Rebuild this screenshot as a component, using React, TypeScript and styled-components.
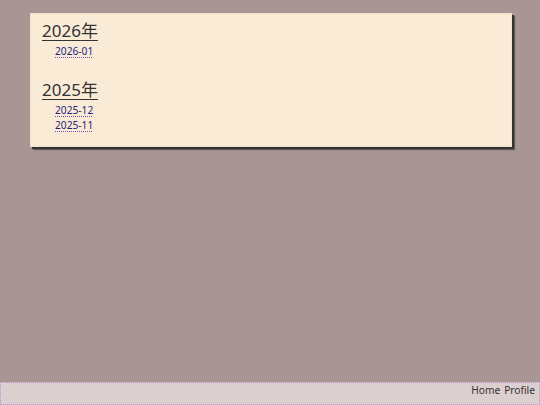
import React from "react";
import styled, { createGlobalStyle } from "styled-components";

const Global = createGlobalStyle`
  html, body { margin: 0; padding: 0; }
  body {
    background: #a89594;
    font-family: "Noto Sans", "Noto Sans CJK JP", sans-serif;
    color: #333;
  }
`;

const Page = styled.div`
  min-height: 100vh;
  display: flex;
  flex-direction: column;
`;

const Main = styled.main`
  flex: 1;
  padding: 13px 28px 0 30px;
`;

const Card = styled.section`
  background: #faebd7;
  border: 1px solid #efe2cf;
  box-shadow: 2px 2px 0 #333, 3px 3px 1px rgba(0, 0, 0, 0.4);
  padding: 5px 11px 13px;
`;

const Year = styled.h2<{ $first?: boolean }>`
  margin: ${(p) => (p.$first ? "0" : "19px")} 0 0;
  font-size: 17px;
  font-weight: 400;
  line-height: 24px;
  text-decoration: underline;
  text-underline-offset: 3px;
  text-decoration-thickness: 1px;
  color: #333;
`;

const Months = styled.ul`
  list-style: none;
  margin: 1px 0 0;
  padding: 0 0 0 13px;
`;

const Month = styled.li`
  font-size: 10.2px;
  line-height: 15px;
`;

const MonthLink = styled.a`
  color: #23237e;
  text-decoration: underline dotted #7a4fb0;
  text-underline-offset: 2px;
`;

const Footer = styled.footer`
  box-sizing: border-box;
  height: 23px;
  background: #dccfcf;
  border: 1px dotted #b98fd0;
  display: flex;
  justify-content: flex-end;
  align-items: flex-start;
  gap: 4px;
  padding: 0 4px 0;
  font-size: 10.2px;
  line-height: 15px;
`;

const FooterLink = styled.a`
  color: #333;
  text-decoration: none;
`;

const archive = [
  { year: "2026", months: ["2026-01"] },
  { year: "2025", months: ["2025-12", "2025-11"] },
];

export default function App() {
  return (
    <>
      <Global />
      <Page>
        <Main>
          <Card>
            {archive.map((g, i) => (
              <div key={g.year}>
                <Year $first={i === 0}>{g.year}年</Year>
                <Months>
                  {g.months.map((m) => (
                    <Month key={m}>
                      <MonthLink href="#">{m}</MonthLink>
                    </Month>
                  ))}
                </Months>
              </div>
            ))}
          </Card>
        </Main>
        <Footer>
          <FooterLink href="#">Home</FooterLink>
          <FooterLink href="#">Profile</FooterLink>
        </Footer>
      </Page>
    </>
  );
}
